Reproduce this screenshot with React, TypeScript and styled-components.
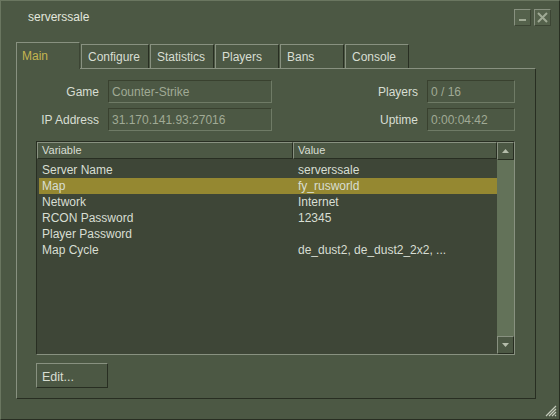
import styled, { createGlobalStyle } from 'styled-components';

const LIGHT = '#889180';
const DARK = '#282e22';
const BG = '#4c5844';
const TEXT = '#d8ded3';

const GlobalStyle = createGlobalStyle`
  html, body {
    margin: 0;
    padding: 0;
    background: ${BG};
  }
  * {
    box-sizing: border-box;
  }
`;

const tabs = ['Main', 'Configure', 'Statistics', 'Players', 'Bans', 'Console'];

const rows = [
  { name: 'Server Name', value: 'serverssale' },
  { name: 'Map', value: 'fy_rusworld', selected: true },
  { name: 'Network', value: 'Internet' },
  { name: 'RCON Password', value: '12345' },
  { name: 'Player Password', value: '' },
  { name: 'Map Cycle', value: 'de_dust2, de_dust2_2x2, ...' },
];

export default function App() {
  return (
    <>
      <GlobalStyle />
      <Window>
        <TitleBar>
          <Title>serverssale</Title>
          <TitleButtons>
            <TitleButton>
              <svg width="9" height="9" viewBox="0 0 9 9">
                <rect x="1" y="6" width="7" height="2" fill="#a0aa95" />
              </svg>
            </TitleButton>
            <TitleButton>
              <svg width="11" height="11" viewBox="0 0 11 11">
                <path d="M1 1 L10 10 M10 1 L1 10" stroke="#a0aa95" strokeWidth="2" />
              </svg>
            </TitleButton>
          </TitleButtons>
        </TitleBar>

        <TabStrip>
          {tabs.map((t, i) => (
            <Tab key={t} $active={i === 0} $width={t === 'Configure' ? 68 : 64}>
              {t}
            </Tab>
          ))}
        </TabStrip>

        <Panel>
          <InfoGrid>
            <Label>Game</Label>
            <Field>Counter-Strike</Field>
            <Label>Players</Label>
            <Field>0 / 16</Field>
            <Label>IP Address</Label>
            <Field>31.170.141.93:27016</Field>
            <Label>Uptime</Label>
            <Field>0:00:04:42</Field>
          </InfoGrid>

          <List>
            <TableArea>
              <Header>
                <HeaderCell>Variable</HeaderCell>
                <HeaderCell>Value</HeaderCell>
              </Header>
              <Rows>
                {rows.map((r) => (
                  <Row key={r.name} $selected={r.selected}>
                    <NameCell>{r.name}</NameCell>
                    <ValueCell>{r.value}</ValueCell>
                  </Row>
                ))}
              </Rows>
            </TableArea>
            <ScrollBar>
              <ScrollButton>
                <svg width="7" height="4" viewBox="0 0 7 4">
                  <path d="M3.5 0 L7 4 L0 4 Z" fill="#b4bcaa" />
                </svg>
              </ScrollButton>
              <Track />
              <ScrollButton>
                <svg width="7" height="4" viewBox="0 0 7 4">
                  <path d="M0 0 L7 0 L3.5 4 Z" fill="#b4bcaa" />
                </svg>
              </ScrollButton>
            </ScrollBar>
          </List>

          <Button>Edit...</Button>
        </Panel>

        <Grip width="12" height="12" viewBox="0 0 12 12">
          <path
            d="M11 1 L1 11 M11 4 L4 11 M11 7 L7 11 M11 10 L10 11"
            stroke="#c4cbbb"
            strokeWidth="1.2"
          />
        </Grip>
      </Window>
    </>
  );
}

// Styles
const Window = styled.div`
  position: relative;
  width: 560px;
  height: 420px;
  background: ${BG};
  border: 1px solid;
  border-color: #6a7660 ${DARK} ${DARK} #6a7660;
  font-family: 'Liberation Sans', Arial, sans-serif;
  font-size: 12px;
  color: ${TEXT};
  padding: 0 0 0 15px;
`;

const TitleBar = styled.div`
  height: 32px;
  display: flex;
  align-items: center;
  padding: 0 8px 0 12px;
`;

const Title = styled.div`
  flex: 1;
  font-size: 12px;
  color: #e2e7dd;
`;

const TitleButtons = styled.div`
  display: flex;
  gap: 3px;
`;

const TitleButton = styled.div`
  width: 17px;
  height: 17px;
  display: flex;
  align-items: center;
  justify-content: center;
  border: 1px solid;
  border-color: ${LIGHT} #3c4534 #3c4534 ${LIGHT};
  background: #55624c;
`;

const TabStrip = styled.div`
  display: flex;
  align-items: flex-end;
  gap: 1px;
  height: 35px;
  padding-top: 9px;
  position: relative;
  z-index: 1;
`;

const Tab = styled.div<{ $active?: boolean; $width: number }>`
  width: ${(p) => p.$width}px;
  height: ${(p) => (p.$active ? 27 : 24)}px;
  margin-bottom: ${(p) => (p.$active ? -1 : 0)}px;
  padding: ${(p) => (p.$active ? '6px 0 0 5px' : '5px 0 0 6px')};
  background: ${BG};
  border-top: 1px solid ${LIGHT};
  border-left: 1px solid ${LIGHT};
  border-right: 1px solid ${(p) => (p.$active ? '#3c4534' : DARK)};
  color: ${(p) => (p.$active ? '#c4b550' : TEXT)};
  font-size: 12px;
  white-space: nowrap;
`;

const Panel = styled.div`
  width: 520px;
  height: 331px;
  border: 1px solid;
  border-color: ${LIGHT} ${DARK} ${DARK} ${LIGHT};
  padding: 11px 20px 0 0;
  display: flex;
  flex-direction: column;
`;

const InfoGrid = styled.div`
  display: grid;
  grid-template-columns: 83px 164px 1fr 88px;
  grid-auto-rows: 23px;
  column-gap: 8px;
  row-gap: 5px;
`;

const Label = styled.div`
  display: flex;
  align-items: center;
  justify-content: flex-end;
  color: ${TEXT};
  padding-right: 1px;
`;

const Field = styled.div`
  display: flex;
  align-items: center;
  padding-left: 3px;
  border: 1px solid;
  border-color: #39412f #6f7b66 #6f7b66 #39412f;
  color: #a0aa95;
`;

const List = styled.div`
  margin: 10px 0 0 19px;
  height: 214px;
  display: flex;
  border: 1px solid;
  border-color: ${DARK} ${LIGHT} ${LIGHT} ${DARK};
  background: #3e4637;
`;

const TableArea = styled.div`
  flex: 1;
  display: flex;
  flex-direction: column;
`;

const Header = styled.div`
  height: 17px;
  display: grid;
  grid-template-columns: 256px 1fr;
  background: ${BG};
`;

const HeaderCell = styled.div`
  border: 1px solid;
  border-color: ${LIGHT} ${DARK} ${DARK} ${LIGHT};
  font-size: 11px;
  padding: 1px 0 0 4px;
  color: ${TEXT};
`;

const Rows = styled.div`
  padding-top: 3px;
`;

const Row = styled.div<{ $selected?: boolean }>`
  height: 16px;
  margin-left: 2px;
  display: grid;
  grid-template-columns: 254px 1fr;
  align-items: center;
  background: ${(p) => (p.$selected ? '#958831' : 'transparent')};
  color: ${TEXT};
  font-size: 12px;
`;

const NameCell = styled.div`
  padding-left: 3px;
`;

const ValueCell = styled.div`
  padding-left: 5px;
`;

const ScrollBar = styled.div`
  width: 17px;
  display: flex;
  flex-direction: column;
  background: #637259;
`;

const ScrollButton = styled.div`
  height: 18px;
  display: flex;
  align-items: center;
  justify-content: center;
  border: 1px solid;
  border-color: ${LIGHT} ${DARK} ${DARK} ${LIGHT};
  background: ${BG};
`;

const Track = styled.div`
  flex: 1;
`;

const Button = styled.div`
  margin: 8px 0 0 19px;
  width: 72px;
  height: 25px;
  border: 1px solid;
  border-color: ${LIGHT} ${DARK} ${DARK} ${LIGHT};
  padding: 6px 0 0 5px;
  font-size: 12.5px;
  color: ${TEXT};
`;

const Grip = styled.svg`
  position: absolute;
  right: 2px;
  bottom: 2px;
`;
